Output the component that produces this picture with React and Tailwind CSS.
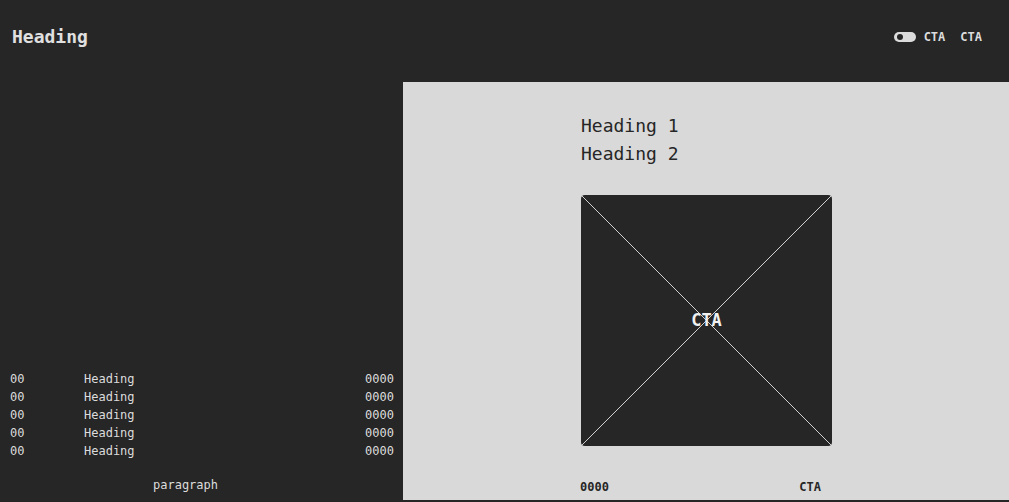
import React from "react";

const rows = [0, 1, 2, 3, 4];

export default function App() {
  return (
    <div
      className="w-[1009px] h-[502px] bg-[#262626] text-[#dcdcdc] flex flex-col overflow-hidden"
      style={{ fontFamily: '"DejaVu Sans Mono", "Liberation Mono", monospace' }}
    >
      <header className="h-[82px] flex items-start justify-between pl-3 pr-[27px] pt-[23px]">
        <h1 className="text-[18px] leading-[28px] font-bold text-[#e0e0e0]">Heading</h1>
        <div className="flex items-center gap-[8px] mt-[8px] text-[12px] leading-[12px] font-bold">
          <span className="w-[22px] h-[10px] rounded-full bg-[#dcdcdc] flex items-center pl-[3px]">
            <span className="w-[6px] h-[6px] rounded-full bg-[#262626]" />
          </span>
          <span>CTA</span>
          <span className="ml-[7px]">CTA</span>
        </div>
      </header>
      <div className="flex h-[418px]">
        <aside className="w-[403px] flex flex-col justify-end pl-[10px] pr-[9px] pb-[6px]">
          <ul className="text-[12px] leading-[18px]">
            {rows.map((i) => (
              <li key={i} className="flex">
                <span className="w-[74px]">00</span>
                <span className="flex-1">Heading</span>
                <span>0000</span>
              </li>
            ))}
          </ul>
          <p className="text-[12px] leading-[18px] mt-[16px] pl-[143px]">paragraph</p>
        </aside>
        <main className="flex-1 bg-[#d9d9d9] text-[#262626] pl-[178px] pt-[30px]">
          <h2 className="text-[18px] leading-[28px]">Heading 1</h2>
          <h3 className="text-[18px] leading-[28px]">Heading 2</h3>
          <div className="relative mt-[27px] w-[251px] h-[251px] bg-[#262626] rounded-[4px] overflow-hidden flex items-center justify-center">
            <svg className="absolute inset-0" width="251" height="251" viewBox="0 0 251 251">
              <line x1="0" y1="0" x2="251" y2="251" stroke="#d0d0d0" strokeWidth="1" />
              <line x1="251" y1="0" x2="0" y2="251" stroke="#d0d0d0" strokeWidth="1" />
            </svg>
            <span className="relative text-[#f0f0f0] text-[17px] font-bold">CTA</span>
          </div>
          <div className="mt-[32px] w-[241px] -ml-[1px] flex justify-between text-[12px] leading-[18px] font-bold">
            <span>0000</span>
            <span>CTA</span>
          </div>
        </main>
      </div>
    </div>
  );
}
